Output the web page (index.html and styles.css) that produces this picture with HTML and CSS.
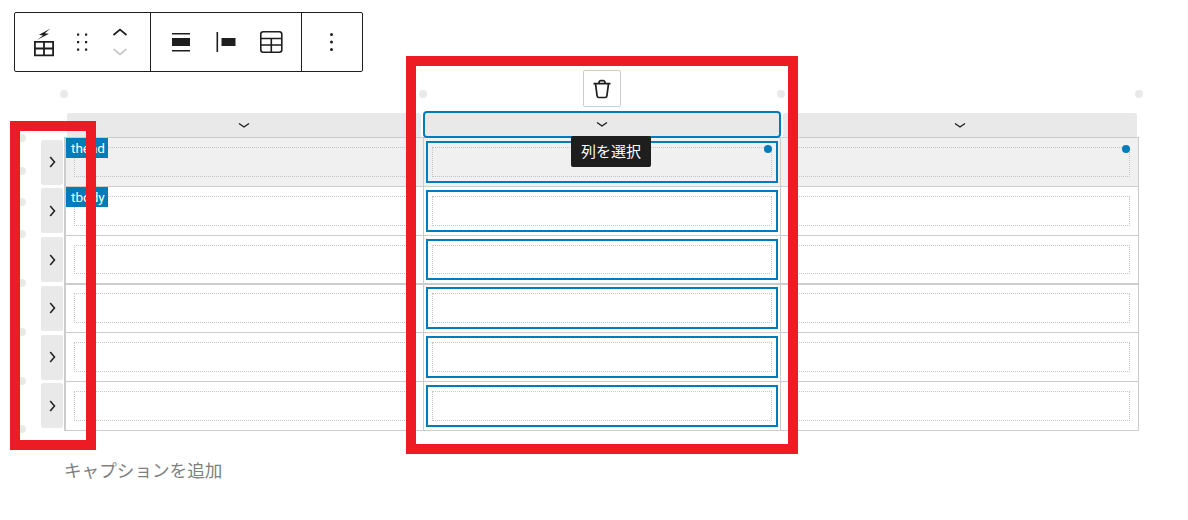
FILE: index.html
```html
<!DOCTYPE html>
<html lang="ja">
<head>
  <meta charset="UTF-8">
  <title>テーブルブロック</title>
  <link rel="stylesheet" href="styles.css">
</head>
<body>
  <!-- toolbar -->
  <div class="toolbar">
    <div class="group group-block">
      <span class="tool">
        <svg width="24" height="30" viewBox="0 0 24 30"><path d="M18.500 1.500 7 7.800l4 .6L5 13l12-6.200-4.200-.5z" fill="#1e1e1e"/><path d="M2.900 14.900h18.200v13.400H2.900zM2.900 21.500h18.200M12 14.900v13.400" fill="none" stroke="#1e1e1e" stroke-width="1.800"/></svg>
      </span>
      <span class="tool">
        <svg width="24" height="24" viewBox="0 0 24 24" fill="#1e1e1e"><rect x="7" y="3.500" width="2.200" height="2.200"/><rect x="15" y="3.500" width="2.200" height="2.200"/><rect x="7" y="11" width="2.200" height="2.200"/><rect x="15" y="11" width="2.200" height="2.200"/><rect x="7" y="18.500" width="2.200" height="2.200"/><rect x="15" y="18.500" width="2.200" height="2.200"/></svg>
      </span>
      <span class="tool mover">
        <svg width="16" height="10" viewBox="0 0 16 10"><path d="m1.500 8 6.500-5.500 6.500 5.500" fill="none" stroke="#1e1e1e" stroke-width="1.700"/></svg>
        <svg width="16" height="10" viewBox="0 0 16 10"><path d="m1.500 2 6.500 5.500 6.500-5.500" fill="none" stroke="#c8c8c8" stroke-width="1.700"/></svg>
      </span>
    </div>
    <div class="group group-align">
      <span class="tool wide">
        <svg width="24" height="24" viewBox="0 0 24 24" fill="#1e1e1e"><rect x="4" y="3" width="18" height="1.500"/><rect x="4" y="8" width="18" height="8"/><rect x="4" y="20" width="18" height="1.500"/></svg>
      </span>
      <span class="tool wide">
        <svg width="24" height="24" viewBox="0 0 24 24" fill="#1e1e1e"><rect x="2.500" y="2" width="1.600" height="20"/><rect x="7.500" y="8" width="14" height="8"/></svg>
      </span>
      <span class="tool wide">
        <svg width="24" height="24" viewBox="0 0 24 24"><rect x="0.800" y="1.800" width="21" height="20.500" rx="2.500" fill="none" stroke="#1e1e1e" stroke-width="1.600"/><path d="M0.800 8.500h21M0.800 15h21M11.300 8.500v13.800" fill="none" stroke="#1e1e1e" stroke-width="1.600"/></svg>
      </span>
    </div>
    <div class="group group-more">
      <span class="tool">
        <svg width="24" height="24" viewBox="0 0 24 24" fill="#1e1e1e"><circle cx="11.500" cy="4.500" r="1.500"/><circle cx="11.500" cy="12" r="1.500"/><circle cx="11.500" cy="19.500" r="1.500"/></svg>
      </span>
    </div>
  </div>

  <!-- column selectors -->
  <div class="col-heads">
    <div class="col-head"><svg class="chev" width="12" height="7" viewBox="0 0 12 7"><path d="m1 1.500 5 3.500 5-3.500" fill="none" stroke="#1e1e1e" stroke-width="1.400"/></svg></div>
    <div class="col-head is-selected"><svg class="chev" width="12" height="7" viewBox="0 0 12 7"><path d="m1 1.500 5 3.500 5-3.500" fill="none" stroke="#1e1e1e" stroke-width="1.400"/></svg></div>
    <div class="col-head"><svg class="chev" width="12" height="7" viewBox="0 0 12 7"><path d="m1 1.500 5 3.500 5-3.500" fill="none" stroke="#1e1e1e" stroke-width="1.400"/></svg></div>
  </div>

  <div class="editor">
    <!-- row selectors -->
    <div class="row-heads">
      <div class="row-head"><svg width="7" height="12" viewBox="0 0 7 12"><path d="m1.200 1 4.300 5-4.300 5" fill="none" stroke="#1e1e1e" stroke-width="1.500"/></svg></div>
      <div class="row-head"><svg width="7" height="12" viewBox="0 0 7 12"><path d="m1.200 1 4.300 5-4.300 5" fill="none" stroke="#1e1e1e" stroke-width="1.500"/></svg></div>
      <div class="row-head"><svg width="7" height="12" viewBox="0 0 7 12"><path d="m1.200 1 4.300 5-4.300 5" fill="none" stroke="#1e1e1e" stroke-width="1.500"/></svg></div>
      <div class="row-head"><svg width="7" height="12" viewBox="0 0 7 12"><path d="m1.200 1 4.300 5-4.300 5" fill="none" stroke="#1e1e1e" stroke-width="1.500"/></svg></div>
      <div class="row-head"><svg width="7" height="12" viewBox="0 0 7 12"><path d="m1.200 1 4.300 5-4.300 5" fill="none" stroke="#1e1e1e" stroke-width="1.500"/></svg></div>
      <div class="row-head"><svg width="7" height="12" viewBox="0 0 7 12"><path d="m1.200 1 4.300 5-4.300 5" fill="none" stroke="#1e1e1e" stroke-width="1.500"/></svg></div>
    </div>

    <div class="table">
      <div class="row row-head-section">
        <div class="cell"><span class="tag">thead</span><div class="cell-box"><div class="field"></div></div></div>
        <div class="cell selected"><span class="mark"></span><div class="cell-box"><div class="field"></div></div></div>
        <div class="cell"><span class="mark"></span><div class="cell-box"><div class="field"></div></div></div>
      </div>
      <div class="row">
        <div class="cell"><span class="tag">tbody</span><div class="cell-box"><div class="field"></div></div></div>
        <div class="cell selected"><div class="cell-box"><div class="field"></div></div></div>
        <div class="cell"><div class="cell-box"><div class="field"></div></div></div>
      </div>
      <div class="row">
        <div class="cell"><div class="cell-box"><div class="field"></div></div></div>
        <div class="cell selected"><div class="cell-box"><div class="field"></div></div></div>
        <div class="cell"><div class="cell-box"><div class="field"></div></div></div>
      </div>
      <div class="row row-thick">
        <div class="cell"><div class="cell-box"><div class="field"></div></div></div>
        <div class="cell selected"><div class="cell-box"><div class="field"></div></div></div>
        <div class="cell"><div class="cell-box"><div class="field"></div></div></div>
      </div>
      <div class="row">
        <div class="cell"><div class="cell-box"><div class="field"></div></div></div>
        <div class="cell selected"><div class="cell-box"><div class="field"></div></div></div>
        <div class="cell"><div class="cell-box"><div class="field"></div></div></div>
      </div>
      <div class="row">
        <div class="cell"><div class="cell-box"><div class="field"></div></div></div>
        <div class="cell selected"><div class="cell-box"><div class="field"></div></div></div>
        <div class="cell"><div class="cell-box"><div class="field"></div></div></div>
      </div>
    </div>
  </div>

  <p class="caption">キャプションを追加</p>

  <!-- things lying over the table -->
  <span class="dot dot-t1"></span>
  <span class="dot dot-t2"></span>
  <span class="dot dot-t3"></span>
  <span class="dot dot-t4"></span>
  <span class="dot dot-l1"></span>
  <span class="dot dot-l2"></span>
  <span class="dot dot-l3"></span>
  <span class="dot dot-l4"></span>
  <span class="dot dot-l5"></span>
  <span class="dot dot-l6"></span>
  <span class="dot dot-l7"></span>
  <span class="dot dot-l8"></span>

  <div class="delete-btn">
    <svg width="24" height="24" viewBox="0 0 24 24"><path d="M8.800 6.500 9.300 4.600c.2-.6.600-1 1.300-1h2.800c.7 0 1.100.4 1.300 1l.5 1.900M3.500 6.700h17M5.500 6.700l1.600 12.100c.1 1 .8 1.700 1.800 1.700h6.200c1 0 1.700-.7 1.800-1.700l1.600-12.100" fill="none" stroke="#1e1e1e" stroke-width="1.700"/></svg>
  </div>
  <div class="tooltip">列を選択</div>

  <div class="mark-box mark-rows"></div>
  <div class="mark-box mark-col"></div>
</body>
</html>
```

FILE: styles.css
```css
* {
  box-sizing: border-box;
}
html,
body {
  margin: 0;
  height: 100%;
}
body {
  position: relative;
  overflow: hidden;
  background: #fff;
  font-family: "Open Sans", "Noto Sans CJK JP", sans-serif;
  color: #1e1e1e;
}

/* toolbar */
.toolbar {
  display: flex;
  width: 349px;
  height: 60px;
  margin: 12px 0 0 14px;
  border: 1px solid #1e1e1e;
  border-radius: 2px;
}
.group {
  display: flex;
  align-items: center;
}
.group-block {
  width: 135px;
  padding-left: 10px;
}
.group-align {
  width: 151px;
  padding-left: 6px;
  border-left: 1px solid #1e1e1e;
}
.group-more {
  flex: 1;
  justify-content: center;
  border-left: 1px solid #1e1e1e;
}
.tool {
  display: flex;
  align-items: center;
  justify-content: center;
  width: 38px;
  height: 100%;
}
.tool.wide {
  width: 46px;
}
.mover {
  flex-direction: column;
  gap: 10px;
}

/* column selectors */
.col-heads {
  position: relative;
  z-index: 1;
  display: flex;
  gap: 4px;
  margin: 41px 0 0 67px;
}
.col-head {
  display: flex;
  align-items: center;
  justify-content: center;
  width: 354px;
  height: 24px;
  background: #e9e9e9;
  border-radius: 2px 2px 0 0;
}
.col-head.is-selected {
  height: 23px;
  margin-bottom: 1px;
  outline: 2px solid #007cba;
  border-radius: 2px;
}

.editor {
  display: flex;
  padding-left: 41px;
}
.row-heads {
  display: flex;
  flex-direction: column;
  gap: 3.78px;
  width: 23px;
  padding-top: 2.5px;
}
.row-head {
  display: flex;
  align-items: center;
  justify-content: center;
  width: 22px;
  height: 45px;
  background: #e9e9e9;
  border-radius: 2px;
}

/* table */
.table {
  width: 1075px;
  border-left: 2px solid #ccc;
  border-bottom: 1px solid #ccc;
}
.row {
  display: grid;
  grid-template-columns: 358px 357px 358px;
  height: 48.83px;
  border-top: 1px solid #ccc;
}
.row-thick {
  border-top-width: 2px;
}
.row-head-section {
  background: #f0f0f0;
}
.cell {
  position: relative;
  display: flex;
  padding: 3px 2px;
  border-right: 1px solid #ccc;
}
.row-thick .cell {
  padding-top: 2px;
}
.cell-box {
  flex: 1;
  display: flex;
  padding: 4px;
  border: 2px solid transparent;
}
.selected .cell-box {
  border-color: #007cba;
}
.field {
  flex: 1;
  border: 1px dotted #c4c4c4;
}
.tag {
  position: absolute;
  top: 0;
  left: 0;
  padding: 0 3px 0 5px;
  height: 20px;
  background: #007cba;
  color: #fff;
  font-family: Roboto, sans-serif;
  font-size: 13.5px;
  line-height: 20px;
}
.mark {
  position: absolute;
  top: 7px;
  right: 8px;
  width: 8px;
  height: 8px;
  border-radius: 50%;
  background: #007cba;
}

.caption {
  margin: 27px 0 0 64px;
  font-size: 17.6px;
  line-height: 24px;
  color: #808080;
}

/* handle dots */
.dot {
  position: absolute;
  width: 8px;
  height: 8px;
  border-radius: 50%;
  background: #e9e9e9;
}
.dot-t1 { left: 60px; top: 90px; }
.dot-t2 { left: 419px; top: 90px; }
.dot-t3 { left: 777px; top: 90px; }
.dot-t4 { left: 1135px; top: 90px; }
.dot-l1 { left: 18px; top: 134px; }
.dot-l2 { left: 18px; top: 167px; }
.dot-l3 { left: 18px; top: 198px; }
.dot-l4 { left: 18px; top: 230px; }
.dot-l5 { left: 18px; top: 279px; }
.dot-l6 { left: 18px; top: 328px; }
.dot-l7 { left: 18px; top: 377px; }
.dot-l8 { left: 18px; top: 425px; }

.delete-btn {
  position: absolute;
  z-index: 2;
  left: 583px;
  top: 70px;
  display: flex;
  align-items: center;
  justify-content: center;
  width: 38px;
  height: 37px;
  background: #fff;
  border: 1px solid #ccc;
  border-radius: 2px;
}
.tooltip {
  position: absolute;
  z-index: 2;
  left: 571px;
  top: 136px;
  width: 80px;
  height: 31px;
  background: #1e1e1e;
  border-radius: 2px;
  color: #fff;
  font-size: 15px;
  line-height: 30px;
  text-align: center;
}

/* red annotation frames */
.mark-box {
  position: absolute;
  z-index: 3;
  border: 10px solid #ed1c24;
}
.mark-rows {
  left: 10px;
  top: 121px;
  width: 86px;
  height: 329px;
}
.mark-col {
  left: 406px;
  top: 56px;
  width: 392px;
  height: 398px;
}
```
